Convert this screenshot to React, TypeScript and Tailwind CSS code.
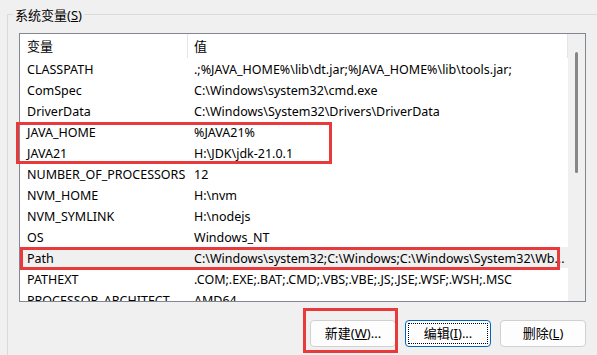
import { FunctionComponent, JSX } from "react";

type EnvVar = { name: string; value: string; selected?: boolean };

const VARS: EnvVar[] = [
  { name: "CLASSPATH", value: ".;%JAVA_HOME%\\lib\\dt.jar;%JAVA_HOME%\\lib\\tools.jar;" },
  { name: "ComSpec", value: "C:\\Windows\\system32\\cmd.exe" },
  { name: "DriverData", value: "C:\\Windows\\System32\\Drivers\\DriverData" },
  { name: "JAVA_HOME", value: "%JAVA21%" },
  { name: "JAVA21", value: "H:\\JDK\\jdk-21.0.1" },
  { name: "NUMBER_OF_PROCESSORS", value: "12" },
  { name: "NVM_HOME", value: "H:\\nvm" },
  { name: "NVM_SYMLINK", value: "H:\\nodejs" },
  { name: "OS", value: "Windows_NT" },
  {
    name: "Path",
    value: "C:\\Windows\\system32;C:\\Windows;C:\\Windows\\System32\\Wb...",
    selected: true,
  },
  { name: "PATHEXT", value: ".COM;.EXE;.BAT;.CMD;.VBS;.VBE;.JS;.JSE;.WSF;.WSH;.MSC" },
  { name: "PROCESSOR_ARCHITECT...", value: "AMD64" },
];

const Row: FunctionComponent<{ item: EnvVar }> = ({ item }): JSX.Element => {
  return (
    <div
      className={`flex h-[21px] shrink-0 items-center whitespace-nowrap pt-[4px] ${
        item.selected ? "bg-[#f0f0f0]" : "bg-white"
      }`}
    >
      <div className="w-[168px] shrink-0 overflow-hidden pl-[7px]">{item.name}</div>
      <div className="flex-1 overflow-hidden pl-[6px]">{item.value}</div>
    </div>
  );
};

const WinButton: FunctionComponent<{
  label: string;
  accel: string;
  dots?: boolean;
  focused?: boolean;
}> = ({ label, accel, dots, focused }): JSX.Element => {
  return (
    <div
      className={`relative flex h-[27px] w-[86px] items-center justify-center rounded-[4px] border bg-[#fdfdfd] pt-[1px] text-[13px] ${
        focused ? "border-[#0067c0]" : "border-[#d0d0d0]"
      }`}
    >
      <span>
        {label}(<span className="underline">{accel}</span>){dots ? "..." : ""}
      </span>
      {focused && (
        <div className="absolute inset-[2px] border border-dotted border-black" />
      )}
    </div>
  );
};

export default function App(): JSX.Element {
  return (
    <div className="relative h-[355px] w-[597px] overflow-hidden bg-[#f0f0f0] font-['Noto_Sans','Noto_Sans_CJK_SC',sans-serif] text-[12.5px] text-black">
      <div className="relative ml-[7px] mt-[14px] h-[400px] w-[640px] border-l border-t border-[#dadada] pl-[11px] pt-[18px]">
        <span className="absolute -top-[8px] left-[5px] bg-[#f0f0f0] px-[2px] text-[13px] leading-[16px]">
          系统变量(<span className="underline">S</span>)
        </span>

        <div className="flex h-[269px] w-[567px] border border-[#828790] bg-white">
          <div className="flex flex-1 flex-col overflow-hidden">
            <div className="flex h-[24px] shrink-0 items-center whitespace-nowrap">
              <div className="flex h-full w-[168px] shrink-0 items-center border-r border-[#e5e5e5] pl-[7px] pt-[2px] text-[13px]">
                变量
              </div>
              <div className="flex h-full flex-1 items-center border-r border-[#e5e5e5] pl-[6px] pt-[2px] text-[13px]">
                值
              </div>
            </div>
            {VARS.map((item) => (
              <Row key={item.name} item={item} />
            ))}
          </div>
          <div className="flex w-[17px] shrink-0 justify-center bg-[#f0f0f0] pt-[18px]">
            <div className="h-[121px] w-[3px] rounded-full bg-[#868686]" />
          </div>
        </div>

        <div className="mt-[18px] flex w-[567px] justify-end gap-[9px]">
          <WinButton label="新建" accel="W" dots />
          <WinButton label="编辑" accel="I" dots focused />
          <WinButton label="删除" accel="L" />
        </div>
      </div>

      {/* annotation boxes */}
      <div className="absolute left-[16px] top-[122px] h-[42px] w-[316px] border-[3px] border-[#e8393b]" />
      <div className="absolute left-[20px] top-[247px] h-[23px] w-[540px] border-[3px] border-[#e8393b]" />
      <div className="absolute left-[303px] top-[308px] h-[45px] w-[95px] border-[3px] border-[#e8393b]" />
    </div>
  );
}
